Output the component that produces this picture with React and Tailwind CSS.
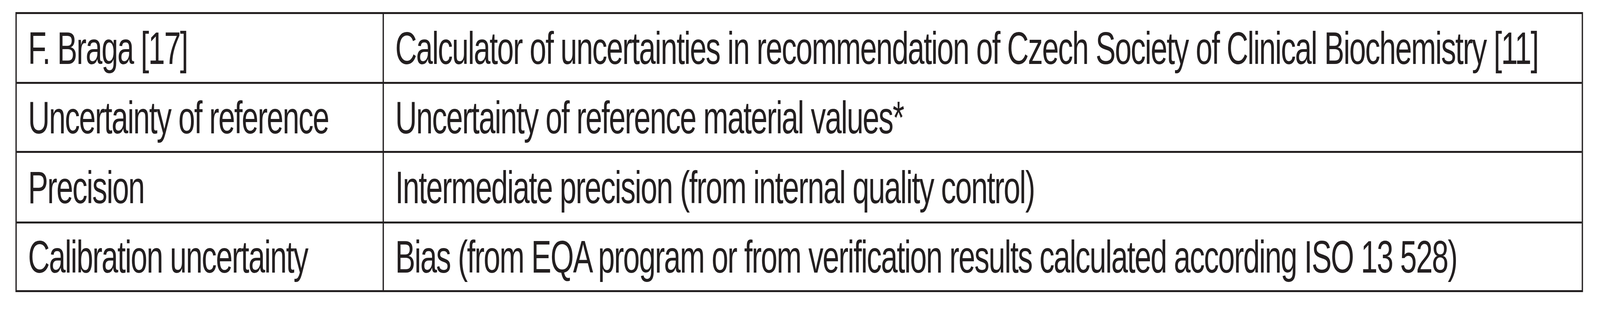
export default function App() {
  // The table is laid out at the 6214px design width and squeezed to the real window width
  const scaleX = typeof window !== "undefined" ? window.innerWidth / 6214 : 1;

  // Rows of the comparison table: left term, right term, row height
  const rows = [
    {
      id: 1,
      left: "F. Braga [17]",
      right:
        "Calculator of uncertainties in recommendation of Czech Society of Clinical Biochemistry [11]",
      h: "h-[174px]",
    },
    {
      id: 2,
      left: "Uncertainty of reference",
      right: "Uncertainty of reference material values*",
      h: "h-[177px]",
    },
    {
      id: 3,
      left: "Precision",
      right: "Intermediate precision (from internal quality control)",
      h: "h-[181px]",
    },
    {
      id: 4,
      left: "Calibration uncertainty",
      right:
        "Bias (from EQA program or from verification results calculated according ISO 13 528)",
      h: "h-[176px]",
    },
  ];

  return (
    <main className="bg-white min-h-screen overflow-hidden font-['Liberation_Sans',Arial,sans-serif] text-[#231f20]">
      <div
        className="w-[6214px] pt-[31px] pl-[60px] origin-top-left"
        style={{ transform: `scaleX(${scaleX})` }}
      >
        <div className="w-[6088px] border-[5px] border-[#231f20]">
          {rows.map((row, index) => (
            <div
              key={row.id}
              className={`grid grid-cols-[1426px_1fr] ${row.h} ${
                index > 0 ? "border-t-[5px] border-[#231f20]" : ""
              }`}
            >
              <div className="flex items-center pl-[44px] border-r-[5px] border-[#231f20] text-[117px] leading-none tracking-[-3.4px] whitespace-nowrap">
                {row.left}
              </div>
              <div className="flex items-center pl-[44px] text-[117px] leading-none tracking-[-3.4px] whitespace-nowrap">
                {row.right}
              </div>
            </div>
          ))}
        </div>
      </div>
    </main>
  );
}
